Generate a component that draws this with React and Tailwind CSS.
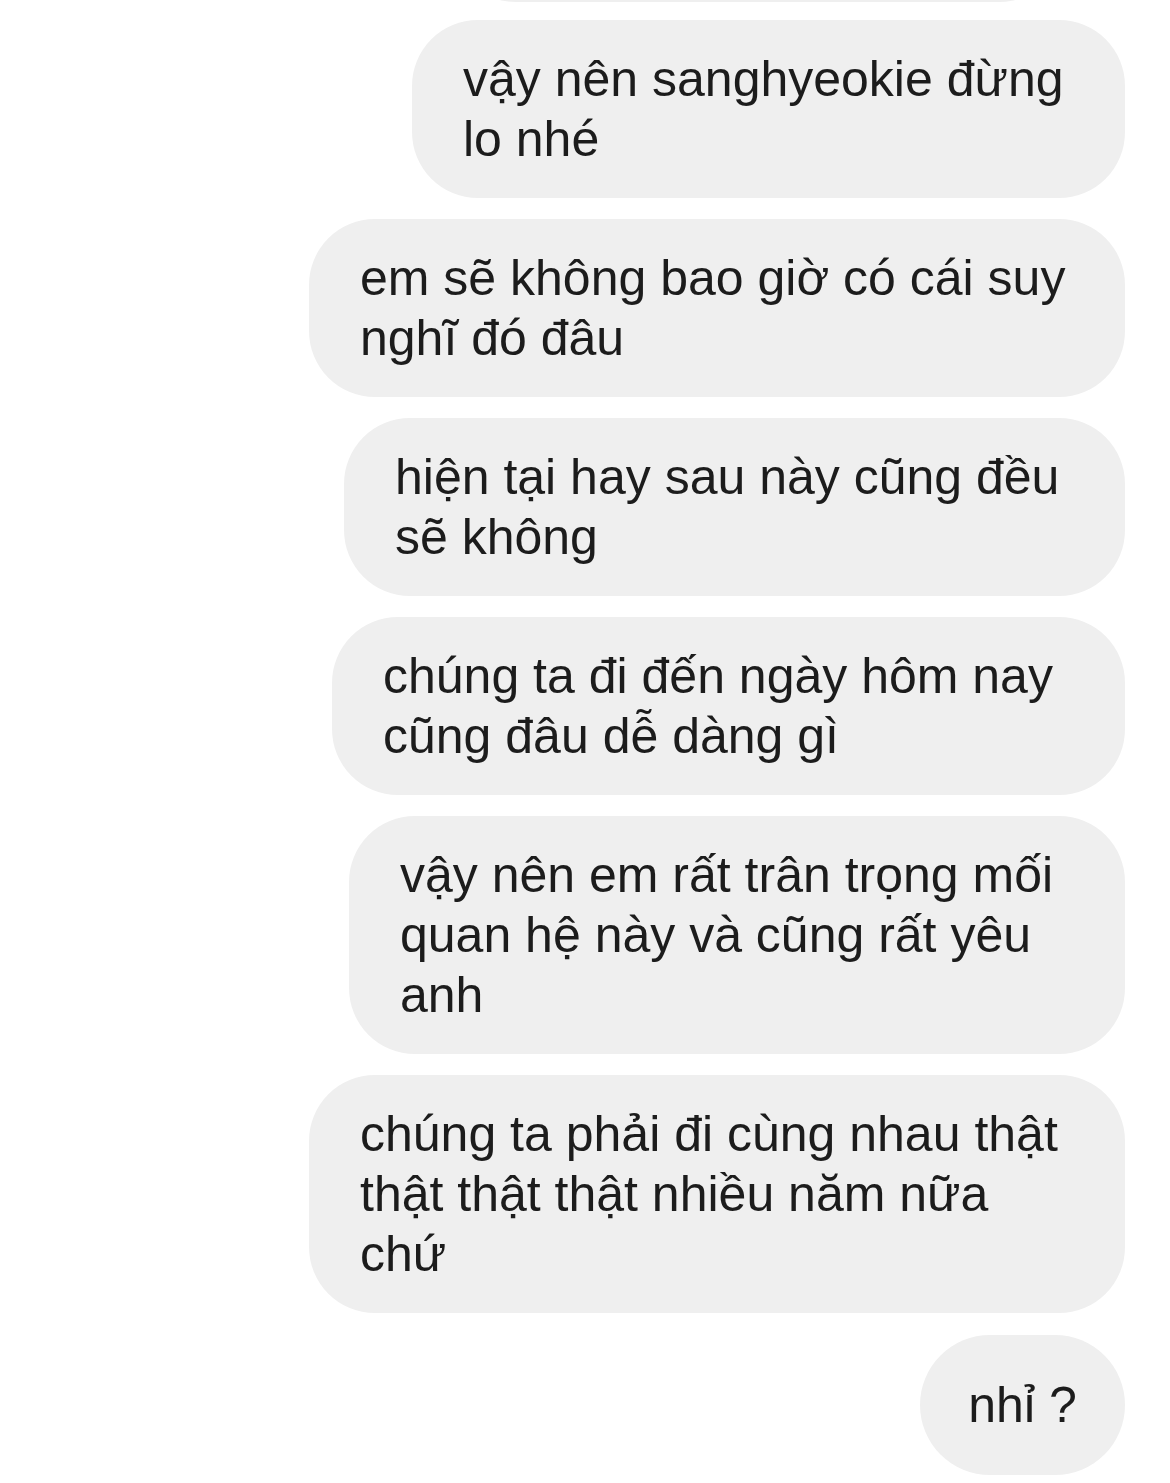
const messages = [
  { w: "w-[713px]", lines: ["vậy nên sanghyeokie đừng", "lo nhé"] },
  { w: "w-[816px]", lines: ["em sẽ không bao giờ có cái suy", "nghĩ đó đâu"] },
  { w: "w-[781px]", lines: ["hiện tại hay sau này cũng đều", "sẽ không"] },
  { w: "w-[793px]", lines: ["chúng ta đi đến ngày hôm nay", "cũng đâu dễ dàng gì"] },
  { w: "w-[776px]", lines: ["vậy nên em rất trân trọng mối", "quan hệ này và cũng rất yêu", "anh"] },
  { w: "w-[816px]", lines: ["chúng ta phải đi cùng nhau thật", "thật thật thật nhiều năm nữa", "chứ"] },
];

function Bubble({ w, lines }) {
  return (
    <div
      className={`${w} rounded-[66px] bg-[#efefef] pl-[51px] pr-[30px] py-[29px] text-[50px] leading-[60px] text-[#1c1c1c] whitespace-nowrap`}
    >
      {lines.map((l, i) => (
        <div key={i}>{l}</div>
      ))}
    </div>
  );
}

export default function App() {
  return (
    <div
      className="min-h-[1483px] bg-white overflow-hidden flex flex-col items-end pr-[45px] gap-[21px]"
      style={{ fontFamily: '"Liberation Sans", Arial, sans-serif' }}
    >
      {/* bubble tail from the previous message, cut off at the top */}
      <div className="-mt-[100px] h-[102px] w-[615px] mr-[60px] rounded-b-[66px] bg-[#efefef] -mb-[3px]" />
      <Bubble {...messages[0]} />
      <Bubble {...messages[1]} />
      <Bubble {...messages[2]} />
      <Bubble {...messages[3]} />
      <Bubble {...messages[4]} />
      <Bubble {...messages[5]} />
      <div className="mt-[1px] w-[205px] h-[140px] rounded-full bg-[#efefef] flex items-center justify-center text-[50px] text-[#1c1c1c]">
        nhỉ ?
      </div>
    </div>
  );
}
